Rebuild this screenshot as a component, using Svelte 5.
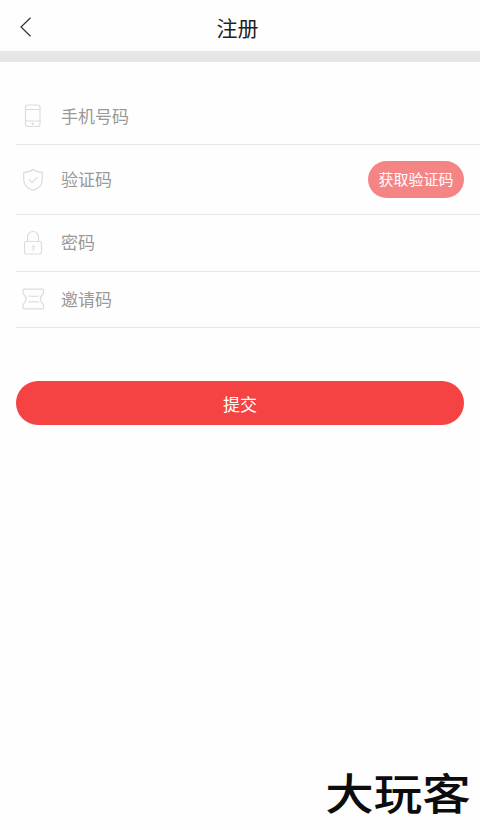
<script lang="ts">
	type Field = {
		name: string;
		label: string;
		icon: 'phone' | 'shield' | 'lock' | 'ticket';
		type: 'tel' | 'text' | 'password';
	};

	const fields: Field[] = [
		{ name: 'phone', label: '手机号码', icon: 'phone', type: 'tel' },
		{ name: 'code', label: '验证码', icon: 'shield', type: 'text' },
		{ name: 'password', label: '密码', icon: 'lock', type: 'password' },
		{ name: 'invite', label: '邀请码', icon: 'ticket', type: 'text' }
	];
</script>

<div class="page">
	<header class="header">
		<button class="back" aria-label="返回">
			<svg width="12" height="20" viewBox="0 0 12 20">
				<path d="M10.5 .8 1 10l9.5 9.2" />
			</svg>
		</button>
		<h1>注册</h1>
	</header>

	<form on:submit|preventDefault>
		{#each fields as field}
			<div class="row row-{field.name}">
				<svg class="icon" width="24" height="26" viewBox="0 0 24 26">
					{#if field.icon === 'phone'}
						<rect x="4.5" y="2" width="14.5" height="21.5" rx="2.5" />
						<path d="M4.500 6.500H19M4.500 18H19" />
						<circle cx="11.8" cy="20.7" r=".6" />
					{:else if field.icon === 'shield'}
						<path
							d="M12 2.200c2.800 2.200 5.700 3.100 9.300 3.200v7c0 5.300-3.800 9-9.300 11-5.500-2-9.300-5.700-9.300-11v-7C6.300 5.300 9.200 4.400 12 2.200Z"
						/>
						<path d="m8 12.800 3 2.800 5.300-5.200" />
					{:else if field.icon === 'lock'}
						<rect x="3.5" y="11.5" width="17" height="12.5" rx="1.8" />
						<path d="M6.500 11.500V7a5.500 5.500 0 0 1 11 0v4.500" />
						<path d="M11.300 16.500c1-.9 2.200-.3 2 .9-.2 1-1.100 1-1.300 2.800" />
					{:else}
						<path
							d="M3 3.200h18.500a1 1 0 0 1 1 1v3.300c-4.200 3.300-4.200 7.700 0 11v3.300a1 1 0 0 1-1 1H3a1 1 0 0 1-1-1v-3.300c4.200-3.300 4.200-7.700 0-11V4.200a1 1 0 0 1 1-1Z"
						/>
						<path d="M7.500 10q5 .7 10 0M7.500 16q5-.7 10 0" />
					{/if}
				</svg>
				<input
					type={field.type}
					name={field.name}
					placeholder={field.label}
					aria-label={field.label}
				/>
				{#if field.name === 'code'}
					<button type="button" class="btn-code">获取验证码</button>
				{/if}
			</div>
		{/each}
		<button class="btn-submit">提交</button>
	</form>

	<footer class="brand">大玩客</footer>
</div>

<style>
	:global(body) {
		margin: 0;
		background: #fff;
	}

	.page {
		display: flex;
		flex-direction: column;
		box-sizing: border-box;
		width: 100%;
		height: 830px;
		overflow: hidden;
		font-family: 'Noto Sans CJK SC', sans-serif;
		background: #fefefe;
	}

	button,
	input {
		padding: 0;
		border: 0;
		outline: 0;
		background: transparent;
		font-family: inherit;
	}

	button {
		cursor: pointer;
	}

	.header {
		display: grid;
		grid-template-columns: 60px 1fr 65px;
		align-items: center;
		height: 51px;
		border-bottom: 11px solid #e6e6e6;
	}

	.back {
		display: flex;
		padding: 3px 0 0 20px;
	}

	.back svg {
		fill: none;
		stroke: #333;
		stroke-width: 1.2;
	}

	h1 {
		margin: 2px 0 0;
		color: #222;
		font-size: 21px;
		font-weight: 400;
		line-height: 30px;
		text-align: center;
	}

	form {
		display: flex;
		flex-direction: column;
		padding: 26px 0 0 16px;
	}

	.row {
		display: flex;
		align-items: center;
		box-sizing: border-box;
		height: 56.5px;
		padding: 0 16px 0 5px;
		border-bottom: 1px solid #e6e6e6;
	}

	.row-phone {
		height: 57px;
	}

	.row-code {
		height: 70px;
	}

	.icon {
		flex: none;
		margin-right: 16px;
		fill: none;
		stroke: #dcdcdc;
		stroke-width: 1.2;
		stroke-linecap: round;
		stroke-linejoin: round;
	}

	input {
		flex: 1;
		min-width: 0;
		height: 30px;
		padding-bottom: 2px;
		box-sizing: border-box;
		color: #333;
		font-size: 17px;
	}

	input::placeholder {
		color: #999;
		opacity: 1;
	}

	.btn-code {
		width: 96px;
		height: 37px;
		padding-bottom: 2px;
		border-radius: 19px;
		background: #f58585;
		color: #fff;
		font-size: 15px;
	}

	.btn-submit {
		height: 44px;
		margin: 53px 16px 0 0;
		border-radius: 22px;
		background: #f54343;
		color: #fff;
		font-size: 17px;
	}

	.brand {
		align-self: flex-end;
		margin: auto 10px 15px 0;
		color: #0c0c0c;
		font-size: 48px;
		font-weight: 500;
		line-height: 48px;
		transform: scale(1.01, 0.9);
	}
</style>
